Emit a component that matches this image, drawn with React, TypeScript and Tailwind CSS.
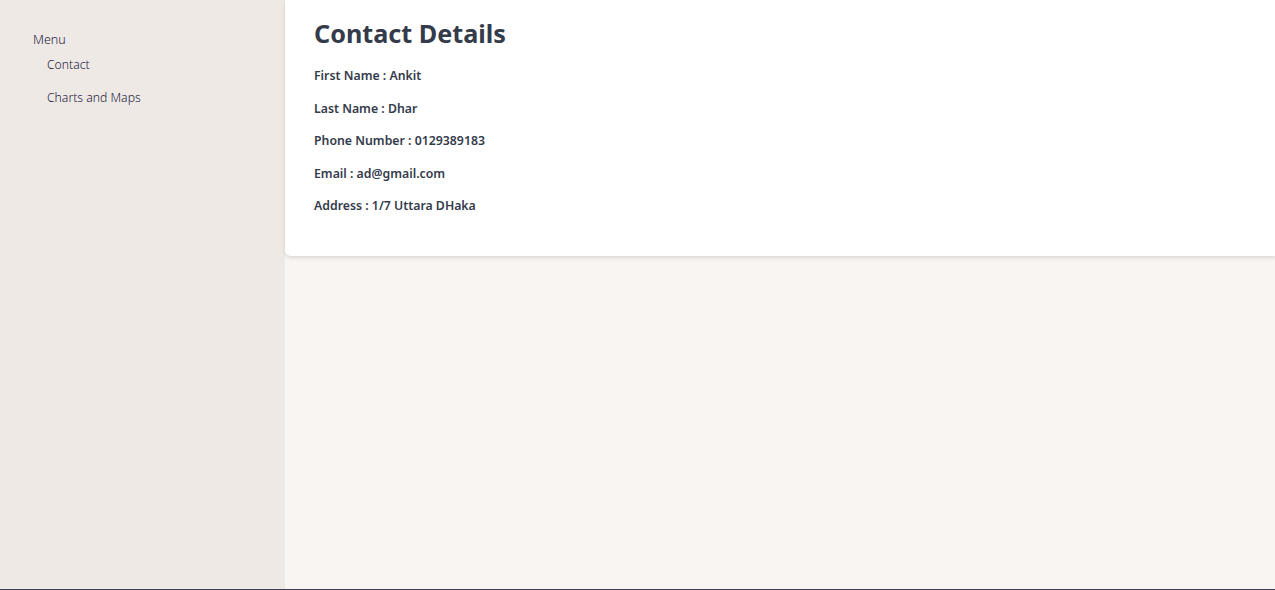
export default function App() {
  const rows = [
    "First Name : Ankit",
    "Last Name : Dhar",
    "Phone Number : 0129389183",
    "Email : ad@gmail.com",
    "Address : 1/7 Uttara DHaka",
  ];
  return (
    <div className="flex flex-col h-[590px] w-full" style={{ fontFamily: '"Noto Sans", "Open Sans", sans-serif' }}>
      <div className="flex flex-1 min-h-0">
        <aside className="w-[285px] shrink-0 bg-[#eee9e5] pt-[30px] pl-[33px]">
          <div className="text-[12.5px] leading-[20px] text-[#1c1a40] font-light">Menu</div>
          <ul className="pl-[14px] mt-[5px] text-[12.2px] leading-[20px] text-[#1c1a40] font-light flex flex-col gap-[13px]">
            <li>Contact</li>
            <li>Charts and Maps</li>
          </ul>
        </aside>
        <main className="flex-1 bg-[#f9f5f2]">
          <section className="bg-white rounded-bl-[6px] shadow-[0_2px_4px_rgba(0,0,0,0.12)] h-[256px] pl-[29px] pt-[13px]">
            <h1 className="text-[25.2px] leading-[40px] font-bold text-[#343b4b]">Contact Details</h1>
            <div className="mt-[13px] flex flex-col gap-[12.5px]">
              {rows.map((r) => (
                <p key={r} className="text-[12.3px] leading-[20px] font-semibold text-[#343b4b]">{r}</p>
              ))}
            </div>
          </section>
        </main>
      </div>
      <div className="h-px bg-[#3b3f5a]" />
    </div>
  );
}
